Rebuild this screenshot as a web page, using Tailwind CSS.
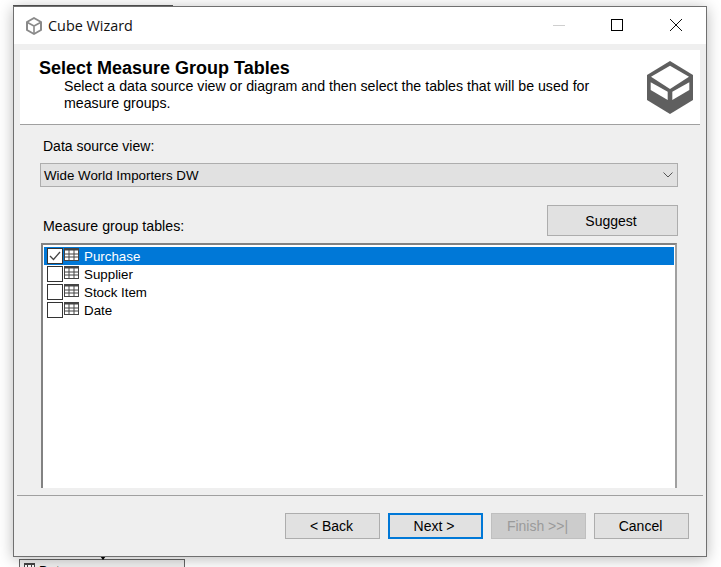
<!DOCTYPE html>
<html lang="en">
<head>
  <meta charset="UTF-8">
  <title>Cube Wizard</title>
  <script src="https://cdn.jsdelivr.net/npm/@tailwindcss/browser@4"></script>
</head>
<body class="bg-white h-[567px] w-[721px] overflow-hidden relative font-['Liberation_Sans',sans-serif] text-[14px] text-black">

  <!-- stuff behind the dialog -->
  <div class="absolute left-[13px] top-[5px] w-[160px] h-px bg-[#555]"></div>
  <div class="absolute left-[19px] top-[559px] w-[166px] h-[12px] border border-[#666] bg-[#f0f0f0] pl-[4px] flex items-start gap-[4px] overflow-hidden">
    <svg width="11" height="9" viewBox="0 0 11 9" class="mt-[3px] shrink-0"><rect x="0.500" y="0.500" width="10" height="8" fill="#fff" stroke="#444"/><path d="M0 1.500H11M3.500 0V9M7.500 0V9" stroke="#444"/></svg>
    <span class="leading-[15px] mt-[3px] text-[13.33px]">Date</span>
  </div>
  <svg width="6" height="4" viewBox="0 0 6 4" class="absolute left-[100px] top-[556px]"><path d="M0 0H6L3 4Z" fill="#000"/></svg>

  <!-- Dialog -->
  <div class="absolute left-[13px] top-[6px] w-[694px] h-[551px] border border-[#707070] bg-[#efefef] shadow-[0_2px_14px_rgba(0,0,0,0.28)] flex flex-col">

    <!-- Title bar -->
    <div class="h-[37px] shrink-0 bg-white flex items-center pl-[10px] pr-[9px]">
      <svg width="20" height="20" viewBox="0 0 20 20" fill="none" stroke="#8a8a8a" stroke-width="2" stroke-linejoin="round"><path d="M10 2L17 6V14L10 18L3 14V6Z"/><path d="M3.500 6.500L10 10L16.500 6.500M10 10V17.500" stroke-width="1.600"/></svg>
      <span class="ml-[4px] font-['Open_Sans',sans-serif] text-[14.4px] text-[#111]">Cube Wizard</span>
      <div class="ml-auto flex items-center -mt-px">
        <div class="w-[12px] h-px bg-[#cfcfcf] mr-[46px]"></div>
        <div class="w-[12px] h-[12px] border border-black mr-[47px]"></div>
        <svg width="12" height="12" viewBox="0 0 12 12" stroke="#111" class="mr-[15px]"><path d="M0 0L12 12M12 0L0 12"/></svg>
      </div>
    </div>

    <!-- Wizard header -->
    <div class="mx-[6px] mt-[6px] h-[75px] shrink-0 bg-white border-b border-[#a0a0a0] flex">
      <div class="pl-[19px] pt-[9px]">
        <h1 class="font-bold text-[18px] leading-[18px]">Select Measure Group Tables</h1>
        <p class="pl-[25px] w-[575px] text-[14.2px] leading-[17px] mt-px">Select a data source view or diagram and then select the tables that will be used for measure groups.</p>
      </div>
      <svg width="48" height="54" viewBox="0 0 48 54" class="ml-auto mr-[6px] mt-[11px] shrink-0">
        <path d="M24 0L47 14V39L24 53L1 39V14Z" fill="#5f5f5f"/>
        <path d="M24 4.700L43 15.700L24 28L5 15.700Z" fill="#fff"/>
        <path d="M4.700 21.300L21.700 30.700V39L4.700 29Z" fill="#fff"/>
        <path d="M43.300 21.300L26.300 30.700V39L43.300 29Z" fill="#fff"/>
      </svg>
    </div>

    <!-- Body -->
    <div class="flex-1 pl-[26px] pr-[28px]">
      <div class="pl-[3px] mt-[13px] leading-[17px]">Data source view:</div>
      <div class="mt-[8px] h-[24px] border border-[#adadad] bg-[#e1e1e1] flex items-center pl-[3px] pr-[4px]">
        <span class="text-[13.33px] pt-[2px]">Wide World Importers DW</span>
        <svg width="10" height="6" viewBox="0 0 10 6" fill="none" stroke="#555" class="ml-auto"><path d="M0.500 0.500L5 5L9.500 0.500"/></svg>
      </div>
      <div class="flex items-end justify-between mt-[18px]">
        <span class="pl-[3px] leading-[17px] mb-px text-[14.2px]">Measure group tables:</span>
        <button class="w-[131px] h-[31px] border border-[#adadad] bg-[#e1e1e1] pt-[2px] pr-[3px]">Suggest</button>
      </div>
      <div class="mt-[7px] mx-px h-[245px] border-2 border-b-0 border-[#828282] border-r-[#a0a0a0] bg-white pt-[2px] pl-px pr-px text-[13.33px]">
        <div class="h-[18px] bg-[#0078d7] text-white flex items-center pl-[3px]">
          <span class="w-[16px] h-[16px] border border-[#333] bg-white flex items-center justify-center"><svg width="12" height="10" viewBox="0 0 12 10" fill="none" stroke="#444" stroke-width="1.300"><path d="M1 5L4.500 8.500L11 1"/></svg></span>
          <svg width="15" height="13" viewBox="0 0 15 13" class="ml-px -mt-[3px]"><rect x="0.500" y="0.500" width="14" height="12" fill="#fff" stroke="#444"/><path d="M0 1.500H15" stroke="#444" stroke-width="2"/><path d="M0 6H15M0 9H15M5 0V13M10 0V13" stroke="#444"/></svg>
          <span class="ml-[5px] pt-[2px]">Purchase</span>
        </div>
        <div class="h-[18px] flex items-center pl-[3px]">
          <span class="w-[16px] h-[16px] border border-[#333] bg-white"></span>
          <svg width="15" height="13" viewBox="0 0 15 13" class="ml-px -mt-[3px]"><rect x="0.500" y="0.500" width="14" height="12" fill="#fff" stroke="#444"/><path d="M0 1.500H15" stroke="#444" stroke-width="2"/><path d="M0 6H15M0 9H15M5 0V13M10 0V13" stroke="#444"/></svg>
          <span class="ml-[5px] pt-[2px]">Supplier</span>
        </div>
        <div class="h-[18px] flex items-center pl-[3px]">
          <span class="w-[16px] h-[16px] border border-[#333] bg-white"></span>
          <svg width="15" height="13" viewBox="0 0 15 13" class="ml-px -mt-[3px]"><rect x="0.500" y="0.500" width="14" height="12" fill="#fff" stroke="#444"/><path d="M0 1.500H15" stroke="#444" stroke-width="2"/><path d="M0 6H15M0 9H15M5 0V13M10 0V13" stroke="#444"/></svg>
          <span class="ml-[5px] pt-[2px]">Stock Item</span>
        </div>
        <div class="h-[18px] flex items-center pl-[3px]">
          <span class="w-[16px] h-[16px] border border-[#333] bg-white"></span>
          <svg width="15" height="13" viewBox="0 0 15 13" class="ml-px -mt-[3px]"><rect x="0.500" y="0.500" width="14" height="12" fill="#fff" stroke="#444"/><path d="M0 1.500H15" stroke="#444" stroke-width="2"/><path d="M0 6H15M0 9H15M5 0V13M10 0V13" stroke="#444"/></svg>
          <span class="ml-[5px] pt-[2px]">Date</span>
        </div>
      </div>
    </div>

    <!-- Footer -->
    <div class="h-[61px] shrink-0 mx-[3px] border-t border-[#a0a0a0] flex justify-end items-start gap-[8px] pt-[17px] pr-[14px]">
      <button class="w-[95px] h-[26px] border border-[#adadad] bg-[#e1e1e1] pr-[2px]">&lt; Back</button>
      <button class="w-[95px] h-[26px] border-2 border-[#0078d7] bg-[#e1e1e1] pr-[3px]">Next &gt;</button>
      <button class="w-[95px] h-[26px] border border-[#bfbfbf] bg-[#cccccc] text-[#9a9a9a] pr-[2px]">Finish &gt;&gt;|</button>
      <button class="w-[95px] h-[26px] border border-[#adadad] bg-[#e1e1e1] pr-[2px]">Cancel</button>
    </div>
  </div>
</body>
</html>
